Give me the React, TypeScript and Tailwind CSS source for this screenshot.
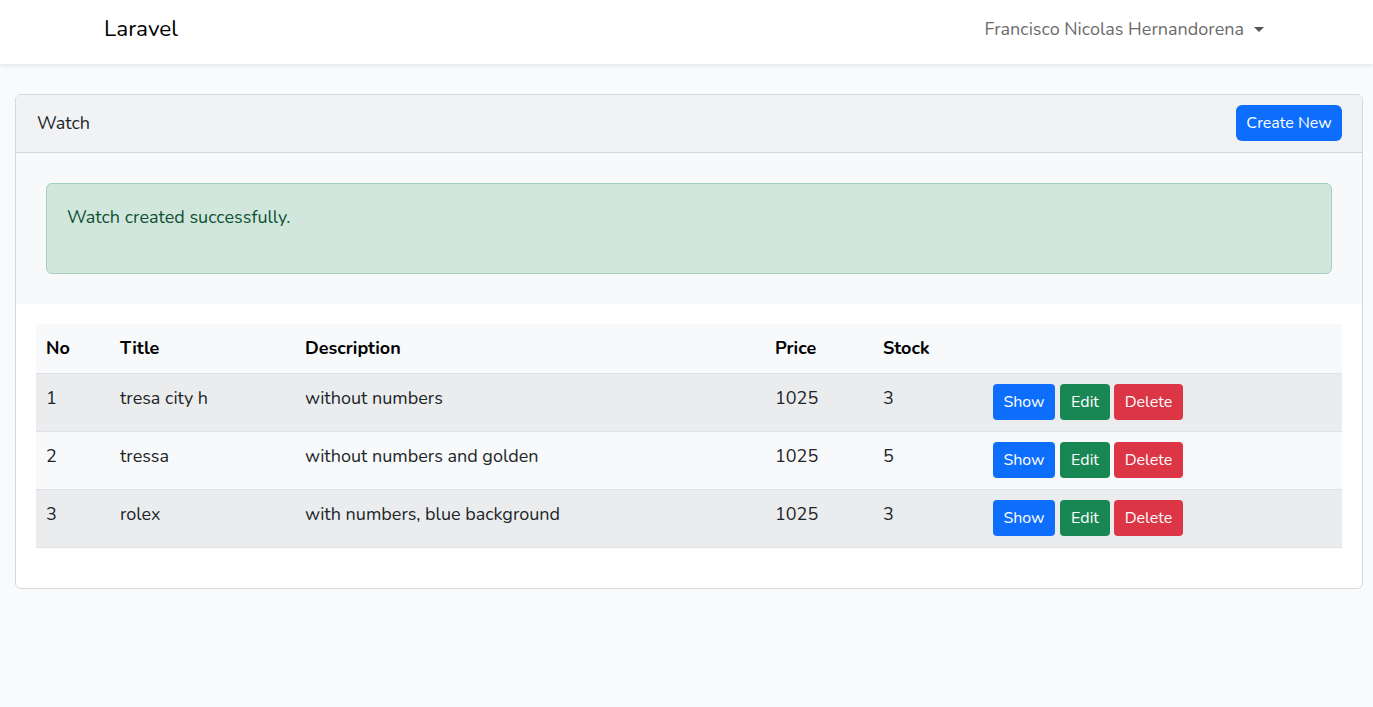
export default function App() {
  const watches = [
    { no: 1, title: 'tresa city h', description: 'without numbers', price: 1025, stock: 3 },
    { no: 2, title: 'tressa', description: 'without numbers and golden', price: 1025, stock: 5 },
    { no: 3, title: 'rolex', description: 'with numbers, blue background', price: 1025, stock: 3 },
  ];

  return (
    <div className="min-h-[707px] bg-[#f8fafc] text-[#212529] text-[18px] font-['Nunito','Open_Sans','Liberation_Sans',sans-serif]">
      {/* Navbar */}
      <nav className="h-16 pb-[6px] bg-white shadow-[0_2px_4px_rgba(0,0,0,0.08)] flex items-center justify-between pl-[104px] pr-[109px]">
        <a className="text-[22.5px] text-black leading-none">Laravel</a>
        <div className="flex items-center text-[#6c6c6c]">
          <span>Francisco Nicolas Hernandorena</span>
          <span className="ml-[10px] mt-[1px] w-0 h-0 border-l-[5px] border-r-[5px] border-t-[5px] border-l-transparent border-r-transparent border-t-[#555]"></span>
        </div>
      </nav>

      <div className="pl-[15px] pr-[10px] pt-[30px]">
        <div className="border border-[#d7d8da] rounded-md bg-white overflow-hidden">
          {/* Header */}
          <div className="h-[58px] bg-[#f1f2f4] border-b border-[#d3d4d6] flex items-center justify-between pl-[21px] pr-[20px]">
            <span>Watch</span>
            <button className="-mt-[2px] h-9 w-[106px] rounded-md bg-[#0d6efd] text-white text-[16px]">Create New</button>
          </div>

          {/* Alert */}
          <div className="bg-[#f8f9fa] p-[30px]">
            <div className="border border-[#a3cfbb] bg-[#d1e7dd] text-[#0f5132] rounded-md p-5">
              <p className="leading-[27px] mb-[22px]">Watch created successfully.</p>
            </div>
          </div>

          {/* Table */}
          <div className="px-5 pt-5 pb-[40px]">
            <table className="w-full border-collapse text-left">
              <thead>
                <tr className="bg-[#f8f9fa] border-b border-[#dee2e6]">
                  <th className="w-[74px] px-[10px] h-[49px] font-bold text-black">No</th>
                  <th className="w-[185px] px-[10px] font-bold text-black">Title</th>
                  <th className="w-[470px] px-[10px] font-bold text-black">Description</th>
                  <th className="w-[108px] px-[10px] font-bold text-black">Price</th>
                  <th className="w-[110px] px-[10px] font-bold text-black">Stock</th>
                  <th className="px-[10px]"></th>
                </tr>
              </thead>
              <tbody>
                {watches.map((w, i) => (
                  <tr
                    key={w.no}
                    className={`border-b border-[#dee2e6] ${i % 2 === 0 ? 'bg-[#ebecee]' : 'bg-[#f8f9fa]'}`}
                  >
                    <td className="px-[10px] pt-[11px] h-[58px] align-top leading-[27px]">{w.no}</td>
                    <td className="px-[10px] pt-[11px] align-top leading-[27px]">{w.title}</td>
                    <td className="px-[10px] pt-[11px] align-top leading-[27px]">{w.description}</td>
                    <td className="px-[10px] pt-[11px] align-top leading-[27px]">{w.price}</td>
                    <td className="px-[10px] pt-[11px] align-top leading-[27px]">{w.stock}</td>
                    <td className="px-[10px] pt-[10px] pb-[10px] align-top">
                      <div className="flex text-white text-[16px]">
                        <button className="h-9 w-[62px] rounded bg-[#0d6efd]">Show</button>
                        <button className="ml-[5px] h-9 w-[50px] rounded bg-[#198754]">Edit</button>
                        <button className="ml-[4px] h-9 w-[69px] rounded bg-[#dc3545]">Delete</button>
                      </div>
                    </td>
                  </tr>
                ))}
              </tbody>
            </table>
          </div>
        </div>
      </div>
    </div>
  );
}
